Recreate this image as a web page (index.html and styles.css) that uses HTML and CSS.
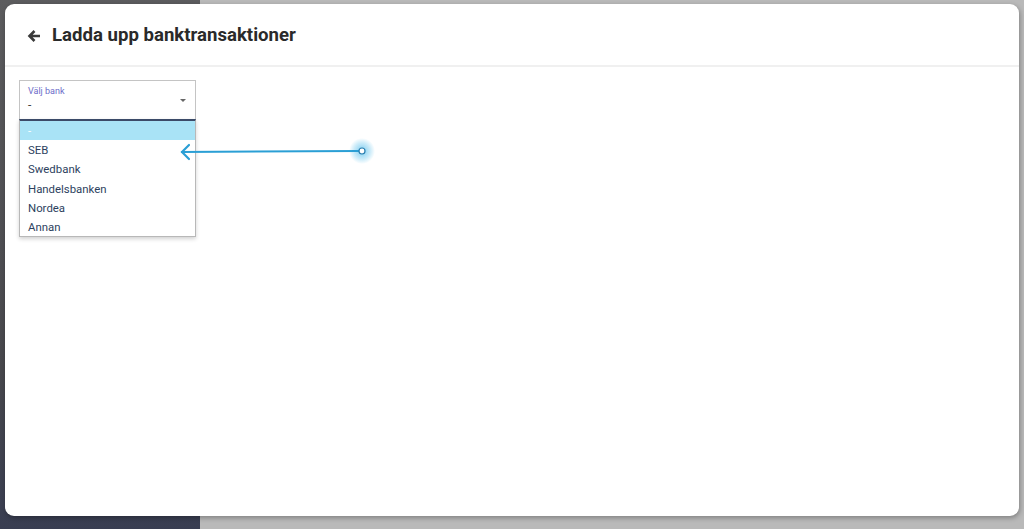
FILE: index.html
```html
<!DOCTYPE html>
<html>
<head>
  <title>Ladda upp banktransaktioner</title>
  <link rel="stylesheet" href="styles.css">
</head>
<body>
  <div class="window">
    <header class="topbar">
      <svg class="back" width="14" height="14" viewBox="0 0 14 14">
        <path d="M13 7H2.5M7.5 2L2.5 7l5 5" fill="none" stroke="#3a3a3a" stroke-width="2.6" stroke-linecap="butt"/>
      </svg>
      <h1>Ladda upp banktransaktioner</h1>
    </header>

    <div class="content">
      <div class="field">
        <div class="select">
          <span class="select-label">Välj bank</span>
          <span class="select-value">-</span>
          <span class="caret"></span>
        </div>

        <ul class="menu">
          <li class="active">-</li>
          <li>SEB</li>
          <li>Swedbank</li>
          <li>Handelsbanken</li>
          <li>Nordea</li>
          <li>Annan</li>
        </ul>

        <!-- pointer annotation -->
        <svg class="pointer" width="200" height="30" viewBox="0 0 200 30">
          <defs>
            <radialGradient id="glow">
              <stop offset="0" stop-color="#6cc6ee" stop-opacity="0.95"/>
              <stop offset="0.6" stop-color="#8fd4f2" stop-opacity="0.5"/>
              <stop offset="1" stop-color="#8fd4f2" stop-opacity="0"/>
            </radialGradient>
          </defs>
          <circle cx="185" cy="15" r="13" fill="url(#glow)"/>
          <line x1="4" y1="16" x2="182" y2="15" stroke="#2b9fd5" stroke-width="2"/>
          <path d="M12 9 L5 16 L12 23" fill="none" stroke="#2b9fd5" stroke-width="2.2" stroke-linecap="round"/>
          <circle cx="185" cy="15" r="3" fill="#fff" stroke="#2b7fb0" stroke-width="1.2"/>
        </svg>
      </div>
    </div>
  </div>
</body>
</html>
```

FILE: styles.css
```css
html, body {
  height: 100%;
}

body {
  margin: 0;
  padding: 4px 5px 13px 5px;
  box-sizing: border-box;
  font-family: Roboto, "Liberation Sans", Arial, sans-serif;
  background:
    linear-gradient(to right, transparent 200px, #b9b9b9 200px),
    linear-gradient(to bottom, #5c5c5e 0%, #47474c 70%, #393e52 100%);
  display: flex;
}

.window {
  flex: 1;
  background: #fff;
  border-radius: 9px;
  box-shadow: 1px 2px 5px rgba(0, 0, 0, 0.3);
  overflow: hidden;
}

.topbar {
  height: 61px;
  display: flex;
  align-items: center;
  padding: 0 0 0 22px;
  border-bottom: 2px solid #f0f0f0;
}

.back {
  margin-right: 11px;
  margin-top: 2px;
}

h1 {
  margin: 0;
  font-size: 18.6px;
  font-weight: bold;
  color: #2a2a2a;
}

.content {
  padding: 13px 14px;
}

.field {
  position: relative;
  width: 177px;
}

.select {
  position: relative;
  height: 39px;
  border: 1px solid #c4c4c4;
  border-bottom: none;
  box-sizing: border-box;
  padding: 5px 8px 0;
}

.select-label {
  display: block;
  font-size: 9px;
  color: #6c6cc9;
  line-height: 11px;
}

.select-value {
  display: block;
  font-size: 12px;
  color: #444;
  line-height: 17px;
}

.caret {
  position: absolute;
  right: 9px;
  top: 18px;
  border-left: 3px solid transparent;
  border-right: 3px solid transparent;
  border-top: 3px solid #666;
}

.menu {
  list-style: none;
  margin: 0;
  padding: 0;
  border: 1px solid #b8b8b8;
  border-top: 2px solid #3b4a68;
  background: #fff;
  box-shadow: 0 2px 4px rgba(0, 0, 0, 0.18);
}

.menu li {
  height: 19.2px;
  line-height: 21px;
  padding: 0 8px;
  font-size: 11.4px;
  color: #2d3f5e;
}

.menu li.active {
  background: #a9e3f6;
  color: #fff;
}

.pointer {
  position: absolute;
  left: 158px;
  top: 56px;
}
```
